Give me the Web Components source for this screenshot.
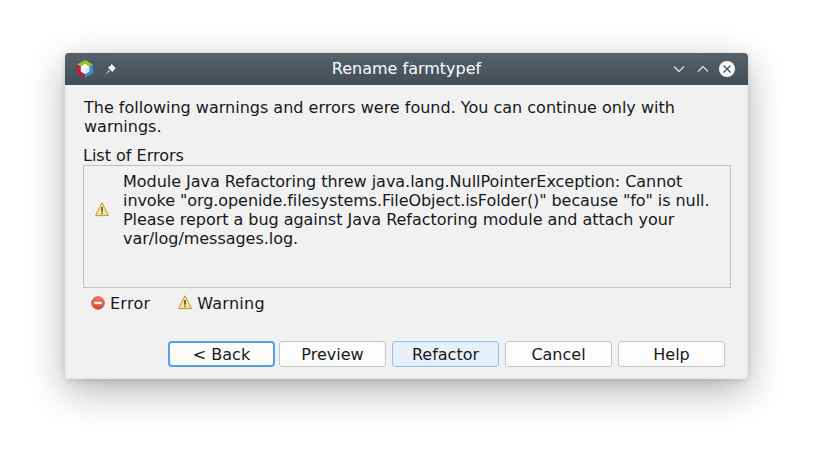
<!DOCTYPE html>
<html>
<head>
<meta charset="utf-8">
<title>Rename farmtypef</title>
<style>
    html, body { margin: 0; background: #fff; }
    body {
        width: 813px;
        height: 456px;
        overflow: hidden;
        padding: 53px 0 0 65px;
        box-sizing: border-box;
        font-family: "DejaVu Sans", sans-serif;
        font-size: 16px;
        color: #16191b;
    }
    .tight { letter-spacing: -0.07px; }
</style>
</head>
<body>
<dialog-window title="Rename farmtypef">
    <p-text>The following warnings and errors were found. You can continue only with warnings.</p-text>
    <error-list label="List of Errors">Module Java Refactoring threw java.lang.NullPointerException: Cannot <span class="tight">invoke "org.openide.filesystems.FileObject.isFolder()" because "fo" is null.</span> Please report a bug against Java Refactoring module and attach your var/log/messages.log.</error-list>
    <error-legend></error-legend>
    <button-row>
        <dlg-button kind="focus">&lt; Back</dlg-button>
        <dlg-button>Preview</dlg-button>
        <dlg-button kind="default" class="gap">Refactor</dlg-button>
        <dlg-button class="gap">Cancel</dlg-button>
        <dlg-button class="gap">Help</dlg-button>
    </button-row>
</dialog-window>

<script>
const WARN_ICON = `<svg width="14" height="15" viewBox="0 0 14 15">
    <path d="M7 .8 L13.4 13.6 H.6 Z" fill="#f7d96a" stroke="#b8953c" stroke-width="1" stroke-linejoin="round"/>
    <path d="M7 2.6 L11.8 12.6 H2.2 Z" fill="#fbe99f"/>
    <rect x="6.3" y="5" width="1.4" height="4.8" fill="#3a3226"/>
    <rect x="6.3" y="10.7" width="1.4" height="1.4" fill="#3a3226"/>
</svg>`;

class DialogWindow extends HTMLElement {
    constructor() {
        super();
        this.attachShadow({ mode: 'open' });
    }

    connectedCallback() {
        const title = this.getAttribute('title') || '';
        this.shadowRoot.innerHTML = `
            <style>
                :host {
                    display: flex;
                    flex-direction: column;
                    width: 683px;
                    height: 326px;
                    border-radius: 4px;
                    overflow: hidden;
                    background: #f1f1f2;
                    box-shadow: 0 12px 38px rgba(0, 0, 0, 0.30), 0 2px 6px rgba(0, 0, 0, 0.12);
                }
                .titlebar {
                    flex: none;
                    height: 32px;
                    display: grid;
                    grid-template-columns: 1fr auto 1fr;
                    align-items: center;
                    background: linear-gradient(#56616a, #424d55);
                    color: #fcfcfc;
                    font-size: 16px;
                }
                .name { margin-top: -1px; }
                .left, .right { display: flex; align-items: center; }
                .left { padding-left: 11px; gap: 10px; }
                .right { justify-content: flex-end; padding-right: 13px; gap: 10px; }
                .right .up { margin-right: -1px; }
                .content {
                    flex: 1;
                    display: flex;
                    flex-direction: column;
                    padding: 13px 17px 10px 17px;
                    border: solid #ebebed;
                    border-width: 0 2px 2px;
                }
                svg { display: block; }
            </style>
            <div class="titlebar">
                <div class="left">
                    <svg width="18" height="18" viewBox="0 0 18 18">
                        <path d="M9 0 17 4.6 9 9 1 4.6Z" fill="#9ac42c"/>
                        <path d="M1 4.6 9 9V18L1 13.4Z" fill="#c8174f"/>
                        <path d="M17 4.6 9 9V18L17 13.4Z" fill="#2f8fd8"/>
                        <path d="M9 4 13.2 6.5V11.5L9 14 4.8 11.5V6.5Z" fill="#fff"/>
                        <path d="M9 9 13.2 6.5V11.5L9 14Z" fill="#e3e6ea"/>
                    </svg>
                    <svg width="13" height="13" viewBox="0 0 12 12">
                        <path d="M7 1 11 5 9.8 5.6 7.8 8.4 3.6 4.2 6.4 2.2Z" fill="#fcfcfc"/>
                        <path d="M4.6 6.6 1 11 5.4 7.4Z" fill="#fcfcfc"/>
                    </svg>
                </div>
                <div class="name">${title}</div>
                <div class="right">
                    <svg width="14" height="14" viewBox="0 0 14 14"><path d="M2 4.5 7 9.5 12 4.5" fill="none" stroke="#eceef0" stroke-width="1.1"/></svg>
                    <svg class="up" width="14" height="14" viewBox="0 0 14 14"><path d="M2 9.5 7 4.5 12 9.5" fill="none" stroke="#eceef0" stroke-width="1.1"/></svg>
                    <svg width="16" height="16" viewBox="0 0 16 16">
                        <circle cx="8" cy="8" r="8" fill="#fcfcfc"/>
                        <path d="M4.5 4.5 11.5 11.5M11.5 4.5 4.5 11.5" stroke="#47525a" stroke-width="1.3"/>
                    </svg>
                </div>
            </div>
            <div class="content"><slot></slot></div>
        `;
    }
}

class PText extends HTMLElement {
    constructor() {
        super();
        this.attachShadow({ mode: 'open' });
        this.shadowRoot.innerHTML = `
            <style>
                :host { display: block; line-height: 19px; margin-bottom: 10px; }
            </style>
            <slot></slot>
        `;
    }
}

class ErrorList extends HTMLElement {
    constructor() {
        super();
        this.attachShadow({ mode: 'open' });
    }

    connectedCallback() {
        this.shadowRoot.innerHTML = `
            <style>
                :host { display: block; margin-left: -1px; }
                .label { line-height: 19px; height: 19px; }
                .box {
                    box-sizing: border-box;
                    height: 123px;
                    width: 648px;
                    border: 1px solid #c1c1c1;
                    display: flex;
                    padding: 6px 12px 0 11px;
                    gap: 14px;
                }
                .icon { flex: none; margin-top: 30px; }
                .text { line-height: 19px; letter-spacing: -0.035px; }
                svg { display: block; }
            </style>
            <div class="label">${this.getAttribute('label')}</div>
            <div class="box">
                <div class="icon">${WARN_ICON}</div>
                <div class="text"><slot></slot></div>
            </div>
        `;
    }
}

class ErrorLegend extends HTMLElement {
    constructor() {
        super();
        this.attachShadow({ mode: 'open' });
        this.shadowRoot.innerHTML = `
            <style>
                :host {
                    display: flex;
                    align-items: center;
                    height: 19px;
                    margin: 6px 0 0 7px;
                    line-height: 19px;
                }
                .item { display: flex; align-items: center; gap: 5px; }
                .item + .item { margin-left: 28px; }
                .item span { letter-spacing: 0.25px; }
                .item svg { margin-top: -2px; }
                svg { display: block; }
            </style>
            <div class="item">
                <svg width="14" height="14" viewBox="0 0 14 14">
                    <defs>
                        <linearGradient id="err" x1="0" y1="0" x2="0" y2="1">
                            <stop offset="0" stop-color="#ee7a63"/>
                            <stop offset="1" stop-color="#d8452f"/>
                        </linearGradient>
                    </defs>
                    <circle cx="7" cy="7" r="6.3" fill="url(#err)" stroke="#c8604c"/>
                    <rect x="3.2" y="5.8" width="7.6" height="2.4" fill="#fbe9e5"/>
                </svg>
                <span>Error</span>
            </div>
            <div class="item">
                ${WARN_ICON}
                <span>Warning</span>
            </div>
        `;
    }
}

class ButtonRow extends HTMLElement {
    constructor() {
        super();
        this.attachShadow({ mode: 'open' });
        this.shadowRoot.innerHTML = `
            <style>
                :host {
                    display: flex;
                    justify-content: flex-end;
                    margin-top: auto;
                    padding-right: 4px;
                }
                ::slotted(.gap) { margin-left: 6px; }
                ::slotted(dlg-button:nth-child(2)) { margin-left: 4px; }
            </style>
            <slot></slot>
        `;
    }
}

class DlgButton extends HTMLElement {
    constructor() {
        super();
        this.attachShadow({ mode: 'open' });
        this.shadowRoot.innerHTML = `
            <style>
                :host {
                    display: flex;
                    align-items: center;
                    justify-content: center;
                    box-sizing: border-box;
                    width: 107px;
                    height: 26px;
                    background: #fcfcfc;
                    border: 1px solid #c4c5c6;
                    border-radius: 3px;
                }
                :host([kind="focus"]) {
                    border: 2px solid #52a2ea;
                    border-radius: 4px;
                }
                :host([kind="default"]) {
                    background: #e6f0fa;
                    border-color: #93bde3;
                }
            </style>
            <slot></slot>
        `;
    }
}

customElements.define('dialog-window', DialogWindow);
customElements.define('p-text', PText);
customElements.define('error-list', ErrorList);
customElements.define('error-legend', ErrorLegend);
customElements.define('button-row', ButtonRow);
customElements.define('dlg-button', DlgButton);
</script>
</body>
</html>
